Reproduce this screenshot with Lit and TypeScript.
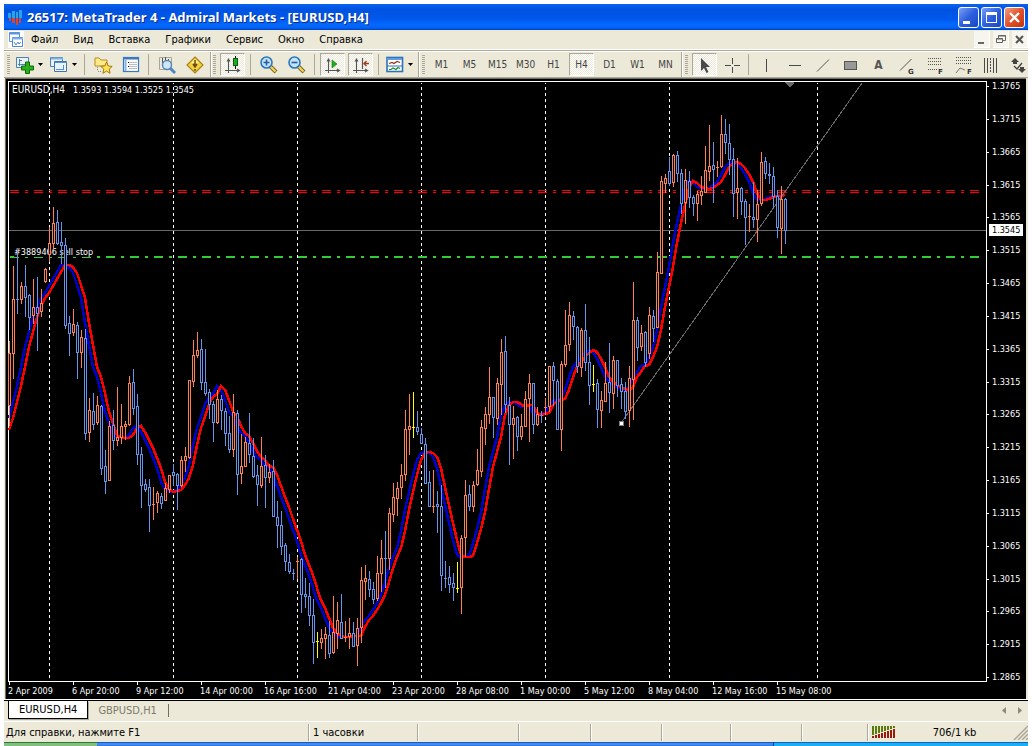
import { LitElement, html, svg, css } from "lit";
import { customElement } from "lit/decorators.js";
import { classMap } from "lit/directives/class-map.js";

/* Each bar: direction (u up, d down, y doji), high, body top, body bottom, low. Bars are 4px apart. */
const BARS = `
u341,353,405,426 u266,299,353,379 d250,299,299,314 u282,286,299,304 d265,286,297,317
d294,295,317,330 u279,307,315,324 d277,307,313,351 u289,303,311,317 u268,269,281,283
u227,243,254,262 u207,223,243,249 d210,222,243,245 d222,242,245,264 d238,245,325,329
d316,323,333,356 u309,324,332,336 d322,325,352,379 u330,337,352,368 d329,338,433,440
u398,410,432,442 d393,411,424,430 u396,405,422,425 d405,406,468,475 d450,466,481,494
u421,426,480,481 d410,425,440,450 u387,437,440,446 u404,426,437,444 u421,424,426,440
u376,383,424,426 d369,382,408,415 d394,406,454,465 d447,454,485,508 d479,484,489,492
d479,487,505,532 u487,504,504,520 u491,493,502,513 d493,496,503,509 u483,488,500,501
u475,475,489,493 d464,472,475,486 d473,474,485,510 u456,460,485,487 u447,456,460,472
u380,380,457,459 u340,355,381,387 u332,350,355,358 d339,349,382,390 d349,382,393,396
d389,392,404,419 d401,404,422,442 u390,399,422,424 d395,399,410,430 d408,411,433,446
d416,433,449,453 u394,412,449,457 d410,413,474,495 u434,466,473,484 u437,442,466,467
d413,443,454,463 d438,456,476,478 d465,475,484,506 u437,466,485,488 d455,465,477,508
u464,472,477,483 d460,471,516,517 d501,517,525,548 d511,525,546,555 d543,545,561,571
d554,562,571,574 d569,573,573,580 u557,561,561,579 d558,559,594,613 d578,594,596,608
d583,596,615,626 d599,615,642,664 y632,641,641,658 u629,638,642,649 u627,634,638,659
d621,635,653,658 u596,632,652,654 u602,620,633,649 d594,622,638,639 u621,637,637,642
u618,633,636,649 d622,633,646,647 u618,628,645,666 u567,580,627,643 u565,578,581,600
d571,579,589,597 d582,589,599,604 u556,573,598,601 u540,558,573,592 d531,558,558,588
u508,513,558,570 u483,497,514,522 u482,488,498,516 u464,475,487,499 u410,429,474,481
u394,426,429,455 y392,427,427,438 d411,427,431,435 d428,434,443,444 d438,444,483,484
d471,482,506,507 u470,506,506,513 d491,504,506,533 d485,506,575,591 d561,578,578,588
d566,577,584,593 d573,583,587,601 y562,588,588,593 u535,538,587,614 u480,495,537,557
d485,494,506,511 u481,485,506,512 u449,470,484,486 u420,427,471,477 u407,414,428,445
u367,397,414,424 d397,397,417,438 u378,383,418,425 u339,352,384,415 d336,351,404,413
d397,405,424,465 u406,418,424,459 d416,417,436,451 u414,426,436,440 u391,399,426,427
u374,383,398,442 d383,383,424,434 u407,414,424,426 d411,415,415,423 u398,407,407,415
u366,366,406,412 d362,366,380,406 d379,381,429,430 u361,364,429,451 u310,345,364,367
u302,315,344,351 d311,316,326,340 d326,327,366,373 u328,330,367,377 d304,330,362,371
d337,362,385,405 y365,384,384,392 d379,383,409,428 u391,400,410,428 u362,383,401,402
d343,382,392,413 u356,360,393,409 d360,360,385,397 d378,384,391,409 d382,391,411,419
u366,378,410,427 u282,320,379,420 d317,320,347,361 u325,333,346,351 d331,332,362,367
u307,315,353,359 d310,316,328,342 u252,272,327,328 u176,181,273,274 u174,178,183,193
d157,171,183,186 u154,155,182,187 d151,155,173,182 d169,173,203,214 u169,180,202,224
d171,181,197,208 d195,197,203,216 u191,194,203,221 u176,191,195,205 u146,170,192,193
u125,166,171,181 d142,165,169,203 u161,167,167,177 u115,134,166,168 d119,134,142,154
d124,143,159,175 d148,159,193,217 u158,188,192,219 d187,188,201,215 d199,201,217,245
u204,216,216,232 d182,217,219,228 u190,204,219,242 u152,162,203,206 d157,161,173,179
d163,174,175,184 d167,176,196,208 d190,196,227,238 u186,199,228,254 d198,199,230,244`
  .trim()
  .split(/\s+/)
  .map((s) => ({ kind: s[0], v: s.slice(1).split(",").map(Number) }));

/* Shifted moving average, one value per bar. */
const AVERAGE = [
  430, 418, 402, 386, 367, 347, 332, 317, 307, 298, 293, 286, 279, 272, 265, 265, 267, 273, 285, 298,
  323, 345, 367, 377, 393, 412, 423, 436, 437, 438, 438, 435, 428, 426, 432, 440, 448, 458, 468, 482,
  489, 492, 491, 490, 485, 478, 465, 445, 428, 417, 404, 397, 394, 386, 390, 400, 412, 416, 426, 433,
  436, 443, 451, 457, 460, 466, 467, 475, 486, 497, 507, 519, 530, 541, 555, 565, 575, 588, 600, 608,
  618, 628, 633, 636, 637, 637, 636, 636, 636, 627, 620, 616, 610, 603, 595, 582, 568, 557, 548, 531,
  510, 492, 475, 460, 453, 452, 453, 457, 468, 487, 505, 523, 540, 555, 557, 557, 556, 543, 529, 512,
  489, 467, 452, 437, 415, 405, 402, 402, 404, 407, 405, 405, 413, 415, 414, 413, 405, 401, 400, 399,
  390, 377, 367, 362, 357, 353, 350, 352, 359, 367, 377, 382, 385, 387, 389, 390, 387, 377, 372, 366,
  365, 357, 347, 330, 307, 287, 267, 243, 223, 205, 188, 181, 183, 187, 188, 189, 188, 185, 182, 175,
  167, 163, 162, 164, 168, 174, 182, 193, 200, 200, 199, 197, 196, 196, 195,
];

const COLORS: Record<string, string> = { u: "#ff7f50", d: "#6495ed", y: "#ffff00" };
const DATES = ["2 Apr 2009", "6 Apr 20:00", "9 Apr 12:00", "14 Apr 00:00", "16 Apr 16:00", "21 Apr 04:00",
  "23 Apr 20:00", "28 Apr 08:00", "1 May 00:00", "5 May 12:00", "8 May 04:00", "12 May 16:00", "15 May 08:00"];
const PRICES = Array.from({ length: 19 }, (_, i) => ({
  text: ((13765 - i * 50) / 10000).toFixed(4),
  y: Math.round(86 + (i * 591) / 18),
}));

const line = (values: number[], from: number) => values.map((y, i) => `${from + i * 4},${y}`).join(" ");

const lens = svg`<path d="M11 11l6 6" stroke="#7a6420" stroke-width="4"/><path d="M11.500 11.500l5 5" stroke="#f2d65a" stroke-width="2.200"/>
  <circle cx="7.500" cy="7.500" r="5.500" fill="#c4e2fb" stroke="#2f78b8" stroke-width="1.600"/>`;
const axes = svg`<path d="M5.500 4v14M2 15.500h14M4 6.500l1.500-2.500 1.500 2.500M14 14l2.500 1.500L14 17" stroke="#555" stroke-width="1.100" fill="none"/>`;

const ICONS: Record<string, unknown> = {
  newChart: svg`<path d="M1.500 2.500h12v10h-12z" fill="#e8f2fb" stroke="#4d80b3"/><path d="M4.500 4v7M3 9.500h8M4 5.500h3" stroke="#4d80b3" fill="none"/>
    <path d="M10.500 7h4v4h4v4h-4v3.500h-4V15h-4v-4h4z" fill="#2cae1c" stroke="#0c6b08"/>`,
  profiles: svg`<path d="M1.500 2.500h12v9h-12z" fill="#e8f2fb" stroke="#4d80b3"/><path d="M2 3.500h12" stroke="#7fb0e0" stroke-width="2"/>
    <path d="M5.500 6.500h12v10h-12z" fill="#e8f2fb" stroke="#3f76ad"/><path d="M6 7.500h12M7 14.500h8M14.500 10v5" stroke="#5a90c8" fill="none"/>`,
  favorites: svg`<path d="M2 3h4l2 2h6v6H2z" fill="#ffe98a" stroke="#b58f1d"/><path d="M4.500 12v4M5 16.500h3" stroke="#888" stroke-dasharray="1 1"/>
    <path d="M13.500 7l1.700 4 4 .4-3 2.700.9 4.200-3.600-2.200-3.600 2.200.9-4.200-3-2.700 4-.4z" fill="#ffe250" stroke="#a47812"/>`,
  marketWatch: svg`<rect x="2.500" y="2.500" width="15" height="14" fill="#fff" stroke="#3a79c2" stroke-width="1.200"/><path d="M3 3h14v1.500H3z" fill="#3a79c2"/>
    <path d="M3.500 5h2v11h-2z" fill="#80b4e8"/><path d="M8 7.500h8M8 9.500h8M8 11.500h8M8 13.500h8" stroke="#b6bec8"/><path d="M7 7.500h1M7 11.500h1" stroke="#111"/>`,
  navigator: svg`<path d="M2.500 2.500h12v12h-12z" fill="#eceae0" stroke="#aaa797"/><path d="M5.500 3v5M8.500 2v5M11.500 4v3" stroke="#555"/>
    <path d="M13 13l5 5" stroke="#4c86c4" stroke-width="3"/><circle cx="10" cy="10" r="4.500" fill="#cce6fa" stroke="#5a84b0" stroke-width="1.400"/>`,
  terminal: svg`<path d="M10 2l8 8-8 8-8-8z" fill="#f4cf3e" stroke="#a9821a" stroke-width="1.200"/><path d="M10 4l4 4H6z" fill="#fff2a8"/>
    <path d="M10 5v7M8 9l2 3 2-3M10 14v2" stroke="#6a4a08" stroke-width="1.500" fill="none"/>`,
  candles: svg`${axes}<path d="M12.500 1v13" stroke="#111"/><rect x="10.500" y="3.500" width="4" height="7" fill="#1fae1f" stroke="#0b5c0b"/>`,
  zoomIn: svg`${lens}<path d="M4.500 7.500h6M7.500 4.500v6" stroke="#22609c" stroke-width="1.600"/>`,
  zoomOut: svg`${lens}<path d="M4.500 7.500h6" stroke="#22609c" stroke-width="1.600"/>`,
  autoScroll: svg`${axes}<path d="M9 5v8l5-4z" fill="#1fae1f" stroke="#0b7c0b" stroke-width=".6"/>`,
  shift: svg`${axes}<path d="M11.500 3v11" stroke="#555" stroke-width="1.200"/><path d="M18 8.500h-5M15.500 6L13 8.500l2.500 2.500" stroke="#a8361a" fill="none" stroke-width="1.300"/>`,
  indicators: svg`<rect x="2" y="2.500" width="15.500" height="14" fill="#fff" stroke="#2d72b8" stroke-width="1.600"/><path d="M2 3h15v2H2z" fill="#5c9fe6"/>
    <path d="M2 11h15" stroke="#2d72b8"/><path d="M4 8.500l3-1 2 1 3-2 3 1" stroke="#94321c" fill="none" stroke-width="1.200"/><path d="M4 14.500h2l2-1.500 3 1.500 2-2 2 1" stroke="#1d8a2c" fill="none" stroke-width="1.200"/>`,
  cursor: svg`<path d="M6 3v13l3-3 2.500 5 2-1-2.500-5h4z" fill="#4a4a4a"/>`,
  crosshair: svg`<path d="M9.500 3v6M9.500 12v6M2 10.500h6M11 10.500h6" stroke="#4a4a4a"/>`,
  vline: svg`<path d="M9.500 4v13" stroke="#4a4a4a"/>`,
  hline: svg`<path d="M4 10.500h12" stroke="#4a4a4a"/>`,
  trend: svg`<path d="M4 16.500L16 4.500" stroke="#555"/>`,
  rectangle: svg`<rect x="3.500" y="6.500" width="12" height="8" fill="#999" stroke="#555"/>`,
  gann: svg`<path d="M3 15.500L14.500 4" stroke="#555"/><text x="11" y="19">G</text>`,
  fibo: svg`<path d="M3 3.500h14M3 6.500h14M3 9.500h14M3 14.500h9" stroke="#555" stroke-dasharray="1 1"/><text x="13" y="19">F</text>`,
  fan: svg`<path d="M3 2.500h15M3 5.500h15M3 8.500h15" stroke="#555" stroke-dasharray="1 1"/><path d="M3 18l4-5 5 2" stroke="#777" fill="none"/><text x="14" y="19">F</text>`,
  cycles: svg`<path d="M3.500 3v15M6.500 3v15M12.500 3v15M15.500 3v15" stroke="#4a4a4a"/><path d="M9.500 3v15" stroke="#4a4a4a" stroke-dasharray="2 1"/>`,
  arrows: svg`<path d="M2 7l4-4 4 4H8v2H4V7zM9 14l4 4 4-4h-2v-2h-4v2z" fill="#444"/><path d="M5 11l3 3 5-6" stroke="#444" fill="none" stroke-width="1.300"/>`,
};

interface Tool { icon?: string; label: string; on?: boolean; menu?: boolean; sep?: boolean; glyph?: string }
const sep: Tool = { label: "", sep: true };
const GROUPS: Tool[][] = [
  [
    { icon: "newChart", label: "Новый график", menu: true }, { icon: "profiles", label: "Профили", menu: true }, sep,
    { icon: "favorites", label: "Обзор рынка" }, { icon: "marketWatch", label: "Окно данных" }, sep,
    { icon: "navigator", label: "Навигатор" }, { icon: "terminal", label: "Терминал" },
  ],
  [
    { icon: "candles", label: "Японские свечи", on: true }, sep,
    { icon: "zoomIn", label: "Увеличить" }, { icon: "zoomOut", label: "Уменьшить" }, sep,
    { icon: "autoScroll", label: "Автопрокрутка", on: true }, { icon: "shift", label: "Сдвиг графика", on: true }, sep,
    { icon: "indicators", label: "Шаблоны", menu: true },
  ],
  ["M1", "M5", "M15", "M30", "H1", "H4", "D1", "W1", "MN"].map((label) => ({ label, on: label === "H4" })),
  [
    { icon: "cursor", label: "Курсор", on: true }, { icon: "crosshair", label: "Перекрестие" }, sep,
    { icon: "vline", label: "Вертикальная линия" }, { icon: "hline", label: "Горизонтальная линия" },
    { icon: "trend", label: "Трендовая линия" }, { icon: "rectangle", label: "Прямоугольник" },
    { glyph: "A", label: "Текст" }, { icon: "gann", label: "Линия Ганна" }, { icon: "fibo", label: "Линии Фибоначчи" },
    { icon: "fan", label: "Веер Фибоначчи" }, { icon: "cycles", label: "Циклические линии" }, { icon: "arrows", label: "Стрелки" },
  ],
];

@customElement("price-chart")
export class PriceChart extends LitElement {
  static styles = css`
    :host { display: flex; height: 620px; background: #000; font: 9px "DejaVu Sans Condensed", "DejaVu Sans", sans-serif; }
    svg { display: block; height: 100%; overflow: hidden; }
    .plot { flex: 1; min-width: 0; }
    .axis { flex: none; width: 40px; }
    text { fill: #fff; white-space: pre; }
    .symbol { font-size: 10px; }
    .tag { fill: #000; }
    .crisp { shape-rendering: crispEdges; }
  `;

  private bar(b: { kind: string; v: number[] }, i: number) {
    const x = 9 + i * 4;
    const c = COLORS[b.kind];
    const [hi, top, bottom, lo] = b.v;
    const h = bottom - top + 1;
    return svg`<rect x=${x} y=${hi} width="1" height=${lo - hi} fill=${c}></rect>
      <rect x=${x - 1} y=${top} width="3" height=${h} fill=${c}></rect>
      ${h > 2 ? svg`<rect x=${x} y=${top + 1} width="1" height=${h - 2} fill="#000"></rect>` : ""}`;
  }

  render() {
    return html`
      <svg class="plot" role="img" aria-label="EURUSD,H4">
        <g transform="translate(-6 -79)">
          <g class="crisp">
            <path d="M8.500 682V81.500H3000M8 681.500H3000" stroke="#fff" fill="none"></path>
            ${[49, 173, 297, 421, 545, 669, 817].map((x) => svg`<path d="M${x + 0.5} 83V681" stroke="#fff" stroke-dasharray="3 3" stroke-dashoffset="2"></path>`)}
            <path d="M9 230.500H3000" stroke="#696969"></path>
            <path d="M10 190.500H980M10 192.500H980" stroke="#f00" stroke-dasharray="9 6 3 6"></path>
            <path d="M10 257H14" stroke="#32cd32" stroke-width="2"></path>
            <path d="M10 257.500H92" stroke="#32cd32" stroke-dasharray="9 6 3 6"></path>
            <path d="M92 257H980" stroke="#32cd32" stroke-width="2" stroke-dasharray="9 6 3 6" stroke-dashoffset="10"></path>
            <polyline points=${line(AVERAGE.slice(1), 9)} fill="none" stroke="#0000cd" stroke-width="2.500"></polyline>
            <polyline points=${line(AVERAGE, 9)} fill="none" stroke="#f00" stroke-width="2.500"></polyline>
            <path d="M621 423L862 83" stroke="#696969" fill="none"></path>
            <path d="M785 82h9v1l-4 4h-1l-4-4z" fill="#696969"></path>
          </g>
          <text x="14" y="255">#3889466 sell stop</text>
          <g class="crisp">
            ${BARS.map((b, i) => this.bar(b, i))}
            <rect x="619" y="421" width="5" height="5" fill="#808080"></rect>
            <rect x="620" y="422" width="3" height="3" fill="#fff"></rect>
            ${DATES.map((_, i) => svg`<rect x=${9 + i * 64} y="682" width="1" height="3" fill="#fff"></rect>`)}
          </g>
          <text class="symbol" x="12" y="93">EURUSD,H4</text>
          <text x="73" y="93">1.3593 1.3594 1.3525 1.3545</text>
          ${DATES.map((d, i) => svg`<text x=${8 + i * 64} y="694">${d}</text>`)}
        </g>
      </svg>
      <svg class="axis" role="img" aria-label="1.3545">
        <g transform="translate(-986 -79)">
          <g class="crisp">
            <rect x="986" y="81" width="1" height="601" fill="#fff"></rect>
            ${PRICES.map((p) => svg`<rect x="987" y=${p.y} width="2" height="1" fill="#fff"></rect>`)}
          </g>
          ${PRICES.map((p) => svg`<text x="992" y=${p.y + 3}>${p.text}</text>`)}
          <rect x="989" y="224" width="34" height="12" fill="#fff"></rect>
          <text class="tag" x="992" y="233">1.3545</text>
        </g>
      </svg>`;
  }
}

@customElement("app-root")
export class AppRoot extends LitElement {
  static styles = css`
    :host { display: block; background: #fff; padding: 4px 4px 0; color: #000; font: 11px "DejaVu Sans Condensed", "DejaVu Sans", sans-serif; }
    button { font: inherit; color: inherit; background: none; border: 0; margin: 0; padding: 0; }
    svg { display: block; }
    .window { background: #ece9d8; }
    .title { display: flex; align-items: center; height: 26px; gap: 4px; padding: 0 3px;
      background: linear-gradient(#0a62ee, #0053e1 20%, #0057ea 55%, #0469ff 80%, #0262f4 92%, #003fb8); }
    .title h1 { flex: 1; margin: 0; font: bold 13px/26px "Noto Sans", sans-serif; color: #fff; text-shadow: 1px 1px #0a2a80; white-space: nowrap; }
    .caption { display: flex; gap: 2px; }
    .caption button { width: 21px; height: 21px; box-sizing: border-box; border: 1px solid #fff; border-radius: 3px;
      background: linear-gradient(135deg, #7ba0f5, #2c5ee0 50%, #1c48c0); }
    .caption .close { background: linear-gradient(135deg, #f0a080, #e3502c 50%, #c03410); }
    .menu { display: flex; align-items: center; height: 19px; padding-left: 4px; }
    .menu nav { display: flex; flex: 1; }
    .menu nav button { padding: 0 8px 0 7px; line-height: 19px; }
    .mdi { display: flex; gap: 3px; }
    .mdi button { width: 16px; height: 17px; background: #f6f5ee; border: 1px solid #fff; border-width: 0 1px 1px 0; }
    .tools { display: flex; height: 25px; overflow: hidden; border-top: 1px solid #fff; border-bottom: 1px solid #aca899; box-shadow: inset 0 1px #aca899, inset 0 2px #fff; padding-top: 2px; }
    .group { display: flex; flex: none; align-items: center; padding-right: 2px; }
    .group + .group { box-shadow: inset 1px 0 #aca899, inset 2px 0 #fff; }
    .group.wide { padding-left: 1px; }
    .grip { width: 3px; height: 19px; margin: 0 2px 0 3px; background: repeating-linear-gradient(#aca899 0 1px, #ece9d8 1px 2px); }
    .tool { display: flex; align-items: center; justify-content: center; width: 25px; height: 23px; margin: 0 1px 0 2px; box-sizing: border-box; color: #444; font-size: 10px; border: 1px solid transparent; }
    .tool.menu-tool { width: 32px; margin: 0 1px; gap: 3px; }
    .tool.on { border-color: #aca899 #fff #fff #aca899; background: repeating-conic-gradient(#fff 0 25%, #ece9d8 0 50%) 0 0 / 2px 2px; }
    .tool.glyph { font-size: 12px; font-weight: bold; color: #555; }
    .tool svg { flex: none; }
    .tool text { font: bold 7px "DejaVu Sans", sans-serif; fill: #333; }
    .sep { width: 8px; height: 21px; background: linear-gradient(#aca899, #aca899) 4px 0 / 1px 100% no-repeat; }
    .wide .sep { width: 6px; background-position: 2px 0; }
    .stage { display: block; border: 1px solid #716f64; border-width: 1px 0 0 1px; margin: 0 2px 0 1px; }
    .tabs { display: flex; align-items: flex-start; height: 20px; border-top: 1px solid #000; border-bottom: 1px solid #fff; margin-top: 1px; padding-left: 4px; background: #ece9d8; box-shadow: 0 -1px #fff; }
    .tabs button { height: 18px; padding: 0 10px; color: #7d7a6c; line-height: 17px; }
    .tabs .current { color: #000; background: #fff; border: 1px solid #000; border-top: 0; box-shadow: 1px 1px #aca899; }
    .tabs .mark { width: 1px; height: 13px; background: #716f64; margin: 3px auto 0 1px; }
    .tabs .scroll { padding: 0 6px; color: #8d8a7c; height: 18px; display: flex; align-items: center; }
    .status { display: grid; grid-template-columns: minmax(0, 1fr) 109px 101px 72px 71px 69px 71px 66px 161px; height: 20px; align-items: center; line-height: 17px; }
    .status .cell { height: 17px; padding-left: 5px; white-space: nowrap; }
    .status .cell:first-child { padding-left: 2px; }
    .status .cell + .cell { box-shadow: inset 1px 0 #aca899, inset 2px 0 #fff; }
    .status .link { display: grid; grid-template-columns: 24px 1fr 15px; align-items: center; text-align: center; }
    .taskbar { display: flex; height: 4px; background: linear-gradient(#1f56c8 1px, #3f8cf0 1px 3px, #2864d8); }
    .taskbar i:first-child { width: 93px; background: linear-gradient(#2f7a2f 1px, #7fbf7f 1px); }
    .taskbar i:last-child { width: 255px; margin-left: auto; border-left: 1px solid #0c3c90; box-sizing: border-box; background: linear-gradient(#0d62c8 1px, #18b0f2 1px); }
  `;

  private tool(t: Tool) {
    if (t.sep) return html`<div class="sep"></div>`;
    const cls = classMap({ tool: true, on: !!t.on, "menu-tool": !!t.menu, glyph: !!t.glyph });
    return html`<button class=${cls} aria-label=${t.label} aria-pressed=${t.on ? "true" : "false"}>
      ${t.icon ? html`<svg width="20" height="20" viewBox="0 0 20 20">${ICONS[t.icon]}</svg>` : t.glyph ?? t.label}${t.menu
        ? html`<svg width="5" height="3" viewBox="0 0 5 3"><path d="M0 0h5L2.500 3z"></path></svg>` : ""}</button>`;
  }

  render() {
    return html`
      <div class="window">
        <header class="title">
          <svg width="16" height="18" viewBox="0 0 16 18"><path d="M1 5h3v5H1zM5 3h3v7H5zM9 4h2v6H9zM12 2h3v8h-3z" fill="#2ba3e0"></path><path d="M2 10h2v3H2zM5 10h3v5H5zM9 10h2v7H9zM12 10h2v5h-2z" fill="#d8442c"></path></svg>
          <h1>26517: MetaTrader 4 - Admiral Markets - [EURUSD,H4]</h1>
          <div class="caption">
            <button aria-label="Свернуть"><svg width="19" height="19" viewBox="0 0 19 19"><path d="M4 13h7v3H4z" fill="#fff"></path></svg></button>
            <button aria-label="Развернуть"><svg width="19" height="19" viewBox="0 0 19 19"><path d="M4 4h11v11H4zM5 7v7h9V7z" fill="#fff" fill-rule="evenodd"></path></svg></button>
            <button class="close" aria-label="Закрыть"><svg width="19" height="19" viewBox="0 0 19 19"><path d="M5 5l9 9M14 5l-9 9" stroke="#fff" stroke-width="2.400"></path></svg></button>
          </div>
        </header>
        <div class="menu">
          <svg width="16" height="17" viewBox="0 0 16 17"><path d="M0 0h16v17H0z" fill="#fff"></path><path d="M1.500 1.500h10v9h-10z" fill="#fff" stroke="#5b96dc"></path><path d="M1 2.500h11" stroke="#5b96dc" stroke-width="2"></path><path d="M4.500 6.500h10v9h-10z" fill="#fff" stroke="#4d88d0"></path><path d="M4 7.500h11" stroke="#7fb0ea" stroke-width="2"></path><path d="M6 11l2 3 2-3 1 2 2-2" stroke="#4d88d0" fill="none"></path></svg>
          <nav>${["Файл", "Вид", "Вставка", "Графики", "Сервис", "Окно", "Справка"].map((m) => html`<button>${m}</button>`)}</nav>
          <div class="mdi">
            <button aria-label="Свернуть график"><svg width="15" height="16" viewBox="0 0 15 16"><path d="M4 11h6v2H4z" fill="#666"></path></svg></button>
            <button aria-label="Восстановить график"><svg width="15" height="16" viewBox="0 0 15 16"><path d="M5.500 7V4.500h7v5H10M3.500 7.500h6v4h-6zM5 5h8M3 8h7" stroke="#666" fill="none"></path></svg></button>
            <button aria-label="Закрыть график"><svg width="15" height="16" viewBox="0 0 15 16"><path d="M4 5l7 7M11 5l-7 7" stroke="#555" stroke-width="2"></path></svg></button>
          </div>
        </div>
        <div class="tools">
          ${GROUPS.map((g, i) => html`<div class=${classMap({ group: true, wide: i > 1 })}><div class="grip"></div>${g.map((t) => this.tool(t))}</div>`)}
        </div>
        <main class="stage"><price-chart></price-chart></main>
        <div class="tabs">
          <button class="current">EURUSD,H4</button><button>GBPUSD,H1</button><div class="mark"></div>
          <button class="scroll" aria-label="Назад"><svg width="4" height="7" viewBox="0 0 4 7"><path d="M4 0v7L0 3.500z" fill="#8d8a7c"></path></svg></button>
          <button class="scroll" aria-label="Вперёд"><svg width="4" height="7" viewBox="0 0 4 7"><path d="M0 0v7l4-3.500z" fill="#8d8a7c"></path></svg></button>
        </div>
        <footer class="status">
          <div class="cell">Для справки, нажмите F1</div><div class="cell">1 часовки</div>
          <div class="cell"></div><div class="cell"></div><div class="cell"></div><div class="cell"></div><div class="cell"></div><div class="cell"></div>
          <div class="cell link">
            <svg width="24" height="12" viewBox="0 0 24 12">${[2, 3, 4, 5, 6, 7, 8, 9].map((r, i) => svg`<rect x=${i * 3} y="0" width="2" height=${11 - r} fill="#5a7a0c"></rect><rect x=${i * 3} y=${12 - r} width="2" height=${r} fill="#9c1c0c"></rect>`)}</svg>
            <span>706/1 kb</span>
            <svg width="15" height="15" viewBox="0 0 15 15"><path d="M1 15L15 1M5 15L15 5M9 15l6-6M13 15l2-2" stroke="#aca899" stroke-width="1.500"></path></svg>
          </div>
        </footer>
        <div class="taskbar"><i></i><i></i></div>
      </div>`;
  }
}
